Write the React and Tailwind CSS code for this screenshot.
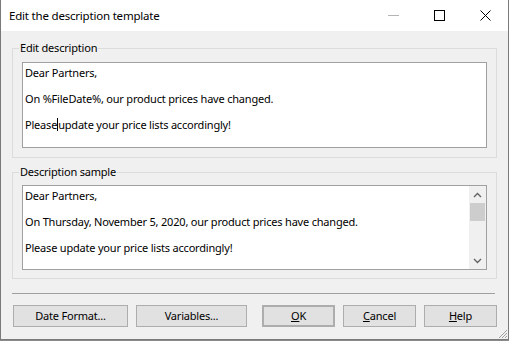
import React from 'react';

// Windows-style dialog: "Edit the description template"

const font = { fontFamily: '"Noto Sans", "Liberation Sans", sans-serif' };

function TitleButtons() {
    return (
        <div className="flex items-center h-full">
            {/* minimize (disabled) */}
            <div className="w-[46px] h-full flex items-center justify-center">
                <svg width="11" height="11" viewBox="0 0 11 11">
                    <path d="M0 5.5h11" stroke="#b4b4b4" strokeWidth="1" />
                </svg>
            </div>
            {/* maximize */}
            <div className="w-[46px] h-full flex items-center justify-center">
                <svg width="11" height="11" viewBox="0 0 11 11">
                    <rect x="0.5" y="0.5" width="10" height="10" fill="none" stroke="#000" strokeWidth="1" />
                </svg>
            </div>
            {/* close */}
            <div className="w-[46px] h-full flex items-center justify-center">
                <svg width="11" height="11" viewBox="0 0 11 11">
                    <path d="M0.5 0.5l10 10M10.5 0.5l-10 10" stroke="#000" strokeWidth="1" />
                </svg>
            </div>
        </div>
    );
}

function GroupBox({ label, className, children }) {
    return (
        <fieldset className={`border border-[#dcdcdc] mx-[11px] px-[9px] ${className}`}>
            <legend className="ml-[-3px] px-[1px] text-[11px] tracking-[-0.2px] leading-[14px] text-black">{label}</legend>
            {children}
        </fieldset>
    );
}

function Scrollbar() {
    return (
        <div className="w-[17px] h-full bg-[#f0f0f0] flex flex-col">
            <div className="h-[17px] flex items-center justify-center">
                <svg width="9" height="6" viewBox="0 0 9 6">
                    <path d="M1 5l3.5-3.5L8 5" fill="none" stroke="#606060" strokeWidth="1.3" />
                </svg>
            </div>
            <div className="h-[18px] mx-[1px] bg-[#cdcdcd]" />
            <div className="flex-1" />
            <div className="h-[17px] flex items-center justify-center">
                <svg width="9" height="6" viewBox="0 0 9 6">
                    <path d="M1 1l3.5 3.5L8 1" fill="none" stroke="#606060" strokeWidth="1.3" />
                </svg>
            </div>
        </div>
    );
}

function Button({ children, className }) {
    return (
        <div className={`h-[22px] bg-[#e1e1e1] border border-[#adadad] flex items-center justify-center text-[11px] tracking-[-0.2px] text-black ${className}`}>
            {children}
        </div>
    );
}

export default function App() {
    return (
        <div className="w-[509px] h-[341px] bg-[#8a8a8a] overflow-hidden" style={font}>
            <div className="h-[340px] border-x border-b border-[#7a7a7a] bg-[#f0f0f0] flex flex-col relative">
                {/* Title bar */}
                <div className="h-[31px] bg-white flex items-center justify-between">
                    <span className="pl-[8px] text-[11.5px] tracking-[-0.2px] text-black">Edit the description template</span>
                    <TitleButtons />
                </div>

                <GroupBox label="Edit description" className="mt-[10px] pt-[7px] pb-[9px]">
                    <div className="h-[86px] bg-white border border-[#a0a0a0] pl-[2px] pt-[3px] text-[11px] tracking-[-0.2px] leading-[13px] text-black">
                        <div>Dear Partners,</div>
                        <div>&nbsp;</div>
                        <div>On %FileDate%, our product prices have changed.</div>
                        <div>&nbsp;</div>
                        <div>
                            Please<span className="inline-block w-px h-[13px] bg-black align-top" />update your price lists accordingly!
                        </div>
                    </div>
                </GroupBox>

                <GroupBox label="Description sample" className="mt-[7px] pt-[6px] pb-[8px]">
                    <div className="h-[85px] bg-white border border-[#a0a0a0] flex text-[11px] tracking-[-0.2px] leading-[13px] text-black">
                        <div className="flex-1 pl-[2px] pt-[3px]">
                            <div>Dear Partners,</div>
                            <div>&nbsp;</div>
                            <div>On Thursday, November 5, 2020, our product prices have changed.</div>
                            <div>&nbsp;</div>
                            <div>Please update your price lists accordingly!</div>
                        </div>
                        <Scrollbar />
                    </div>
                </GroupBox>

                {/* separator */}
                <div className="mt-[14px] ml-[11px] w-[483px] h-px bg-[#a0a0a0]" />

                {/* buttons */}
                <div className="mt-[11px] flex pl-[12px]">
                    <Button className="w-[115px]">Date Format...</Button>
                    <Button className="w-[111px] ml-[8px]">Variables...</Button>
                    <Button className="w-[73px] ml-[15px] border-2 border-[#0078d7]">
                        <span><span className="underline underline-offset-1">O</span>K</span>
                    </Button>
                    <Button className="w-[73px] ml-[8px]">
                        <span><span className="underline underline-offset-1">C</span>ancel</span>
                    </Button>
                    <Button className="w-[73px] ml-[8px]">
                        <span><span className="underline underline-offset-1">H</span>elp</span>
                    </Button>
                </div>

                {/* resize grip */}
                <svg className="absolute right-0 bottom-0" width="10" height="10" viewBox="0 0 10 10">
                    <path d="M9 1L1 9M9 4L4 9M9 7L7 9" stroke="#a0a0a0" strokeWidth="1" />
                </svg>
            </div>
        </div>
    );
}
